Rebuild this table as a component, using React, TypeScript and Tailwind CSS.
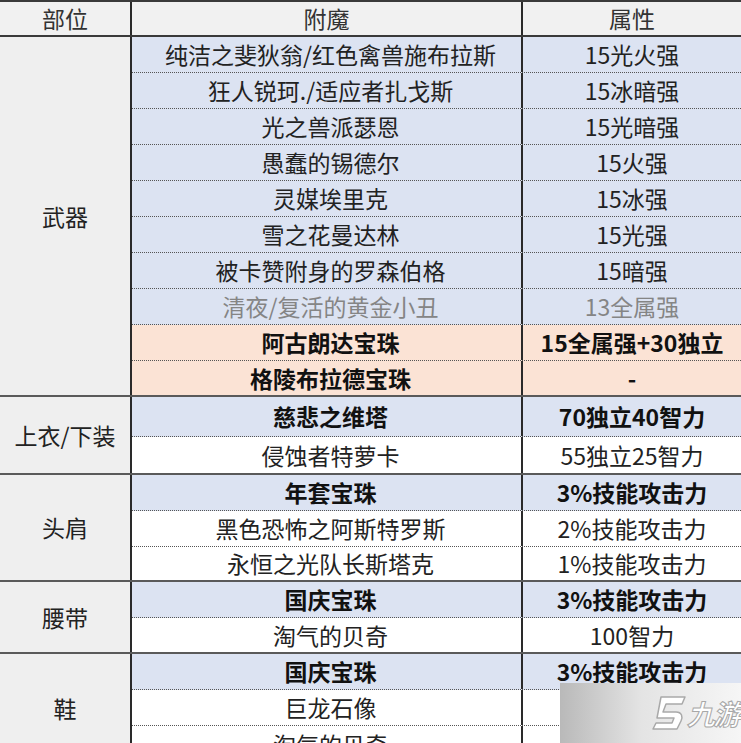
import React from 'react';

type Row = {
    name: string;
    attr: string;
    bg: 'blue' | 'orange' | 'white';
    bold?: boolean;
    muted?: boolean;
    h?: string;
};

type Section = { label: string; rows: Row[]; last?: boolean };

const sections: Section[] = [
    {
        label: '武器',
        rows: [
            { name: '纯洁之斐狄翁/红色禽兽施布拉斯', attr: '15光火强', bg: 'blue' },
            { name: '狂人锐珂./适应者扎戈斯', attr: '15冰暗强', bg: 'blue' },
            { name: '光之兽派瑟恩', attr: '15光暗强', bg: 'blue' },
            { name: '愚蠢的锡德尔', attr: '15火强', bg: 'blue' },
            { name: '灵媒埃里克', attr: '15冰强', bg: 'blue' },
            { name: '雪之花曼达林', attr: '15光强', bg: 'blue' },
            { name: '被卡赞附身的罗森伯格', attr: '15暗强', bg: 'blue' },
            { name: '清夜/复活的黄金小丑', attr: '13全属强', bg: 'blue', muted: true },
            { name: '阿古朗达宝珠', attr: '15全属强+30独立', bg: 'orange', bold: true },
            { name: '格陵布拉德宝珠', attr: '-', bg: 'orange', bold: true, h: 'h-[34px]' },
        ],
    },
    {
        label: '上衣/下装',
        rows: [
            { name: '慈悲之维塔', attr: '70独立40智力', bg: 'blue', bold: true, h: 'h-[40px]' },
            { name: '侵蚀者特萝卡', attr: '55独立25智力', bg: 'white', h: 'h-[36px]' },
        ],
    },
    {
        label: '头肩',
        rows: [
            { name: '年套宝珠', attr: '3%技能攻击力', bg: 'blue', bold: true },
            { name: '黑色恐怖之阿斯特罗斯', attr: '2%技能攻击力', bg: 'white' },
            { name: '永恒之光队长斯塔克', attr: '1%技能攻击力', bg: 'white', h: 'h-[33px]' },
        ],
    },
    {
        label: '腰带',
        rows: [
            { name: '国庆宝珠', attr: '3%技能攻击力', bg: 'blue', bold: true },
            { name: '淘气的贝奇', attr: '100智力', bg: 'white', h: 'h-[34px]' },
        ],
    },
    {
        label: '鞋',
        last: true,
        rows: [
            { name: '国庆宝珠', attr: '3%技能攻击力', bg: 'blue', bold: true },
            { name: '巨龙石像', attr: '', bg: 'white' },
            { name: '淘气的贝奇', attr: '', bg: 'white' },
        ],
    },
];

const bgClass = {
    blue: 'bg-[#dce3f2]',
    orange: 'bg-[#fbe3d5]',
    white: 'bg-white',
};

function TableRow({ row, isLast }: { row: Row; isLast: boolean }) {
    const tone = row.bold
        ? 'font-bold text-[#111]'
        : row.muted
          ? 'text-[#858585]'
          : 'text-[#222]';
    return (
        <div
            className={`flex ${row.h ?? 'h-[36px]'} ${bgClass[row.bg]} ${
                isLast ? '' : 'border-b border-dotted border-[#555]'
            }`}
        >
            <div className={`flex w-[391px] items-center justify-center border-r-2 border-[#2a2a2a] pl-2 ${tone}`}>
                {row.name}
            </div>
            <div className={`flex flex-1 items-center justify-center ${tone}`}>{row.attr}</div>
        </div>
    );
}

// blurred "九游" watermark in the bottom right corner
function Watermark() {
    return (
        <div className="absolute bottom-0 right-0 flex h-[60px] w-[181px] items-center justify-end gap-0.5 bg-linear-to-r from-[#b9b9b9] via-[#e4e4e4] via-45% to-[#f6f6f6] pr-0.5">
            <svg width="42" height="42" viewBox="0 0 42 42" className="-mr-1">
                <path
                    d="M14 5 H38 L35 12 H19 L16 20 H29 C35 20 36 25 34 29 L30 37 H6 L9 31 H25 L27 26 H10 Z"
                    fill="#ffffff"
                    stroke="#a9a9a9"
                    strokeWidth="1.5"
                    strokeLinejoin="round"
                />
            </svg>
            <span
                className="text-[28px] font-bold italic leading-none tracking-[-2px] text-white"
                style={{ WebkitTextStroke: '1px #a8a8a8' }}
            >
                九游
            </span>
        </div>
    );
}

export default function App() {
    return (
        <div
            className="relative h-[743px] w-[741px] overflow-hidden bg-white text-[23px] leading-none"
            style={{ fontFamily: '"Noto Sans CJK SC", "Noto Sans", sans-serif' }}
        >
            <div className="flex h-[37px] border-y-2 border-[#3a3a3a] bg-[#f1f1f1] text-[#333]">
                <div className="flex w-[132px] items-center justify-center border-r-2 border-[#2a2a2a]">部位</div>
                <div className="flex w-[391px] items-center justify-center border-r-2 border-[#2a2a2a]">附魔</div>
                <div className="flex flex-1 items-center justify-center">属性</div>
            </div>
            {sections.map(sec => (
                <div
                    key={sec.label}
                    className={`flex ${sec.last ? '' : 'border-b-2 border-[#5a5a5a]'}`}
                >
                    <div className="flex w-[132px] shrink-0 items-center justify-center border-r-2 border-[#2a2a2a] bg-[#efefef] text-[#222]">
                        {sec.label}
                    </div>
                    <div className="flex flex-1 flex-col">
                        {sec.rows.map((row, i) => (
                            <TableRow key={i} row={row} isLast={i === sec.rows.length - 1} />
                        ))}
                    </div>
                </div>
            ))}
            <Watermark />
        </div>
    );
}
